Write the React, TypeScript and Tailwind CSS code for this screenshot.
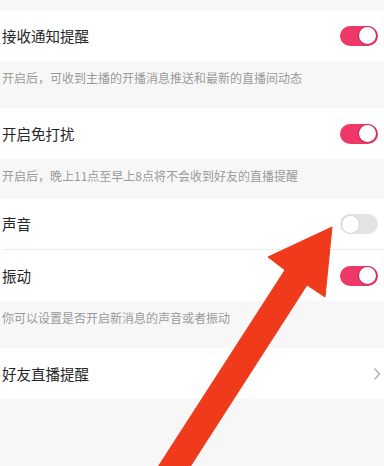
function Toggle({ on }: { on: boolean }) {
  return (
    <div
      className={`flex h-[20px] w-[38px] items-center rounded-full p-[2px] ${
        on ? "justify-end bg-[#ef3768]" : "justify-start bg-[#e3e3e3]"
      }`}
    >
      <div
        className={`h-[17px] w-[17px] rounded-full bg-white ${
          on ? "shadow-[0_0_0_1px_#c9285a]" : "shadow-[0_0_0_1px_#d6d6d6]"
        }`}
      />
    </div>
  );
}

function Chevron() {
  return (
    <svg width="8" height="14" viewBox="0 0 8 14" className="mr-[-3px]">
      <polyline points="1.5,1.5 6.5,7 1.5,12.5" fill="none" stroke="#a8a8a8" strokeWidth="1.2" />
    </svg>
  );
}

function Row({ title, on, divider }: { title: string; on?: boolean; divider?: boolean }) {
  return (
    <div className="bg-white pl-[2px]">
      <div
        className={`flex h-[51px] items-center justify-between pr-[6px] ${
          divider ? "border-b border-[#ececec]" : ""
        }`}
      >
        <span className="text-[14.5px] text-[#262626]">{title}</span>
        {on === undefined ? <Chevron /> : <Toggle on={on} />}
      </div>
    </div>
  );
}

function Desc({ text, h }: { text: string; h: string }) {
  return (
    <div className={`${h} pl-[2px] pt-[9px] text-[12px] leading-[16px] text-[#9a9a9a]`}>{text}</div>
  );
}

export default function App() {
  return (
    <div
      className="relative h-[466px] w-[384px] overflow-hidden bg-[#f7f7f7]"
      style={{ fontFamily: '"Noto Sans CJK SC", "Noto Sans", sans-serif' }}
    >
      <div className="h-[10px]" />
      <Row title="接收通知提醒" on={true} />
      <Desc text="开启后，可收到主播的开播消息推送和最新的直播间动态" h="h-[47px]" />
      <Row title="开启免打扰" on={true} />
      <Desc text="开启后，晚上11点至早上8点将不会收到好友的直播提醒" h="h-[40px]" />
      <Row title="声音" on={false} divider />
      <Row title="振动" on={true} />
      <Desc text="你可以设置是否开启新消息的声音或者振动" h="h-[47px]" />
      <Row title="好友直播提醒" />

      <svg
        className="pointer-events-none absolute left-0 top-0"
        width="384"
        height="466"
        viewBox="0 0 384 466"
      >
        <polygon
          points="156,470 285,270 268,257 332,227 325,297 307,285 188,470"
          fill="#f03a1c"
          stroke="#f03a1c"
          strokeWidth="1"
          strokeLinejoin="round"
        />
      </svg>
    </div>
  );
}
